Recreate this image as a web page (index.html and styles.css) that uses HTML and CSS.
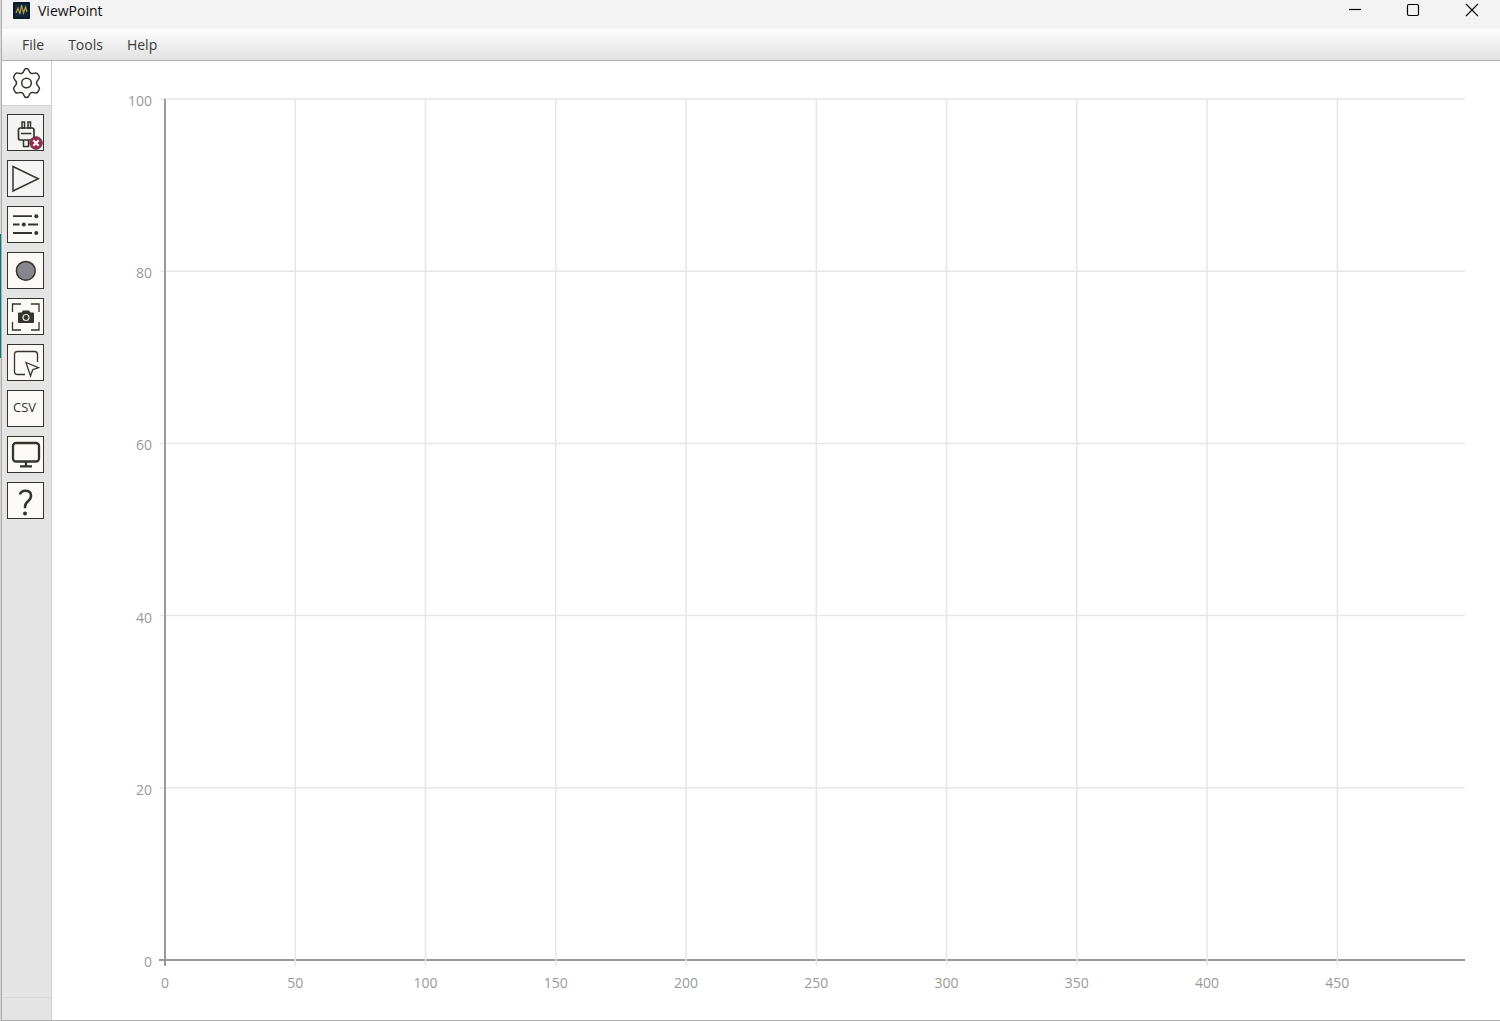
FILE: index.html
```html
<!DOCTYPE html>
<html lang="en">
<head>
    <meta charset="UTF-8">
    <meta name="viewport" content="width=device-width, initial-scale=1.0">
    <title>ViewPoint</title>
    <link rel="stylesheet" href="styles.css">
</head>
<body>
    <div class="desktop-edge"></div>
    <div class="window">
        <!-- Title bar -->
        <header class="title-bar">
            <svg class="app-icon" width="17" height="17" viewBox="0 0 17 17">
                <rect width="17" height="17" rx="1" fill="#0b1b2b"/>
                <rect x="2" y="2" width="13" height="13" fill="#12293b"/>
                <path d="M3 11 L5 6 L7 12 L8.500 3 L10.500 11 L12.500 5 L14 10" fill="none" stroke="#b39a45" stroke-width="1.200"/>
            </svg>
            <h1>ViewPoint</h1>
            <div class="window-controls">
                <button type="button" aria-label="Minimize">
                    <svg width="14" height="14" viewBox="0 0 14 14"><path d="M1 6.500h12"/></svg>
                </button>
                <button type="button" aria-label="Maximize">
                    <svg width="14" height="14" viewBox="0 0 14 14"><rect x="1.500" y="1.500" width="11" height="11" rx="1.500"/></svg>
                </button>
                <button type="button" aria-label="Close">
                    <svg width="14" height="14" viewBox="0 0 14 14"><path d="M2 1l12 12M14 1L2 13"/></svg>
                </button>
            </div>
        </header>

        <!-- Menu bar -->
        <nav class="menu-bar">
            <button type="button">File</button>
            <button type="button">Tools</button>
            <button type="button">Help</button>
        </nav>

        <div class="workspace">
            <!-- Tool bar -->
            <aside class="sidebar">
                <button type="button" class="settings" aria-label="Settings">
                    <svg width="31" height="32" viewBox="0 0 30 32">
                        <path d="M15 1.500c1.500 0 2.200 .8 2.600 2.200c.6 2.300 2.300 3.300 4.500 2.700c2.500-.7 3.500-.7 4.300 .8l1.300 2.300c.7 1.400 .2 2.100-1.200 3.500c-1.800 1.800-1.800 4.200 0 6c1.400 1.400 1.900 2.100 1.200 3.500l-1.300 2.300c-.8 1.500-1.800 1.500-4.300 .8c-2.200-.6-3.900 .4-4.500 2.700c-.4 1.400-1.100 2.200-2.600 2.200s-2.200-.8-2.600-2.200c-.6-2.300-2.300-3.300-4.500-2.700c-2.500 .7-3.500 .7-4.300-.8l-1.300-2.300c-.7-1.400-.2-2.100 1.200-3.500c1.800-1.800 1.800-4.200 0-6c-1.400-1.400-1.900-2.100-1.200-3.500l1.300-2.300c.8-1.500 1.800-1.500 4.300-.8c2.200 .6 3.900-.4 4.500-2.700c.4-1.400 1.100-2.200 2.600-2.200z"/>
                        <circle cx="15" cy="16" r="4.800"/>
                    </svg>
                </button>
                <div class="tools">
                    <button type="button" class="tool pale" aria-label="Connect">
                        <svg width="35" height="35" viewBox="0 0 35 35">
                            <rect x="14" y="7" width="2.500" height="6"/>
                            <rect x="20" y="7" width="2.500" height="6"/>
                            <rect x="10.500" y="13" width="15.500" height="12" rx="2" stroke-width="1.700"/>
                            <path d="M13 18.500h10.500M15.500 25v6.500h5V25"/>
                            <circle cx="28" cy="28" r="6.300" fill="#9b2849" stroke="#6b4450" stroke-width="1"/>
                            <path d="M25.300 25.300l5.400 5.400M30.700 25.300l-5.400 5.400" stroke="#fff" stroke-width="2"/>
                        </svg>
                    </button>
                    <button type="button" class="tool pale" aria-label="Start">
                        <svg width="35" height="35" viewBox="0 0 35 35"><path d="M5 5.500v24.500L30.300 17.800z"/></svg>
                    </button>
                    <button type="button" class="tool" aria-label="Adjust">
                        <svg width="35" height="35" viewBox="0 0 35 35">
                            <path d="M5 9.200h19M5 17.500h6.500M20 17.500h10M5 26h19" stroke-width="1.800"/>
                            <g fill="#34342e" stroke="none">
                                <circle cx="28.300" cy="9.200" r="2"/>
                                <circle cx="15.800" cy="17.500" r="2"/>
                                <circle cx="28.300" cy="26" r="2"/>
                            </g>
                        </svg>
                    </button>
                    <button type="button" class="tool" aria-label="Record">
                        <svg width="35" height="35" viewBox="0 0 35 35"><circle cx="17.800" cy="17.800" r="9.400" fill="#87878b"/></svg>
                    </button>
                    <button type="button" class="tool" aria-label="Screenshot">
                        <svg width="35" height="35" viewBox="0 0 35 35">
                            <path d="M4.500 13V5h8.500M23 5h8v8M31 23v8h-8M13 31H4.500v-8" stroke-width="1.300"/>
                            <path d="M11 13.500h2.500l1.500-2h6l1.500 2h2.500q1 0 1 1v8.500q0 1-1 1h-14q-1 0-1-1v-8.500q0-1 1-1z" fill="#34342e" stroke="none"/>
                            <circle cx="18" cy="18.500" r="3" stroke="#e4e4de" stroke-width="1.200"/>
                        </svg>
                    </button>
                    <button type="button" class="tool" aria-label="Select">
                        <svg width="35" height="35" viewBox="0 0 35 35">
                            <path d="M17 29.500H9.500q-3 0-3-3V9.500q0-3 3-3h17q3 0 3 3V17" stroke-width="1.300"/>
                            <path d="M18 17.500l12.500 5.200l-5.800 2l-2.200 6.300z" stroke-width="1.300"/>
                        </svg>
                    </button>
                    <button type="button" class="tool csv">CSV</button>
                    <button type="button" class="tool" aria-label="Display">
                        <svg width="35" height="35" viewBox="0 0 35 35">
                            <rect x="5" y="6" width="26" height="18.500" rx="3" stroke-width="2.300"/>
                            <path d="M18 24.500v4.500M12 29.300h12" stroke-width="2.300"/>
                        </svg>
                    </button>
                    <button type="button" class="tool" aria-label="About">
                        <svg width="35" height="35" viewBox="0 0 35 35">
                            <path d="M12 11.500q1-3.700 5.500-3.700q5.500 0 5.500 5q0 3-3 5.500q-3 2.500-3 5.500v1.500" stroke-width="2.500"/>
                            <circle cx="17" cy="30.500" r="2" fill="#34342e" stroke="none"/>
                        </svg>
                    </button>
                </div>
                <div class="sidebar-footer"></div>
            </aside>

            <!-- Chart: x runs from 0 to 499, so 50 units are 10.02% of the width -->
            <main class="chart">
                <svg class="plot" role="img" aria-label="Empty chart">
                    <g class="grid">
                        <line x1="-5" x2="100%" y1="0%" y2="0%"/>
                        <line x1="-5" x2="100%" y1="20%" y2="20%"/>
                        <line x1="-5" x2="100%" y1="40%" y2="40%"/>
                        <line x1="-5" x2="100%" y1="60%" y2="60%"/>
                        <line x1="-5" x2="100%" y1="80%" y2="80%"/>
                    </g>
                    <g class="axis">
                        <line x1="-6" x2="100%" y1="100%" y2="100%"/>
                        <svg y="6" overflow="visible"><line x1="0" x2="0" y1="-6" y2="100%"/></svg>
                    </g>
                    <svg class="grid" y="6" overflow="visible">
                        <line x1="10.02%" x2="10.02%" y1="-6" y2="100%"/>
                        <line x1="20.04%" x2="20.04%" y1="-6" y2="100%"/>
                        <line x1="30.06%" x2="30.06%" y1="-6" y2="100%"/>
                        <line x1="40.08%" x2="40.08%" y1="-6" y2="100%"/>
                        <line x1="50.10%" x2="50.10%" y1="-6" y2="100%"/>
                        <line x1="60.12%" x2="60.12%" y1="-6" y2="100%"/>
                        <line x1="70.14%" x2="70.14%" y1="-6" y2="100%"/>
                        <line x1="80.16%" x2="80.16%" y1="-6" y2="100%"/>
                        <line x1="90.18%" x2="90.18%" y1="-6" y2="100%"/>
                    </svg>
                    <g class="y-labels">
                        <text x="-13" y="0%" dy="7">100</text>
                        <text x="-13" y="20%" dy="7">80</text>
                        <text x="-13" y="40%" dy="7">60</text>
                        <text x="-13" y="60%" dy="7">40</text>
                        <text x="-13" y="80%" dy="7">20</text>
                        <text x="-13" y="100%" dy="7">0</text>
                    </g>
                    <g class="x-labels">
                        <text x="0%" y="100%" dy="28">0</text>
                        <text x="10.02%" y="100%" dy="28">50</text>
                        <text x="20.04%" y="100%" dy="28">100</text>
                        <text x="30.06%" y="100%" dy="28">150</text>
                        <text x="40.08%" y="100%" dy="28">200</text>
                        <text x="50.10%" y="100%" dy="28">250</text>
                        <text x="60.12%" y="100%" dy="28">300</text>
                        <text x="70.14%" y="100%" dy="28">350</text>
                        <text x="80.16%" y="100%" dy="28">400</text>
                        <text x="90.18%" y="100%" dy="28">450</text>
                    </g>
                </svg>
            </main>
        </div>
    </div>
</body>
</html>
```
FILE: styles.css
```css
* {
    box-sizing: border-box;
}

body {
    display: flex;
    height: 100vh;
    margin: 0;
    overflow: hidden;
    font-family: "Open Sans", "Noto Sans", sans-serif;
    font-size: 14px;
    background-color: #fff;
}

button {
    padding: 0;
    border: none;
    background: none;
    font: inherit;
    color: inherit;
}

svg {
    display: block;
}

/* Strip of the desktop behind the window */
.desktop-edge {
    width: 2px;
    border-right: 1px solid #acacac;
    background: linear-gradient(#d8d8de 234px, #007a80 234px, #007a80 358px, #d4d4d4 358px);
}

.window {
    flex: 1;
    min-width: 0;
    display: flex;
    flex-direction: column;
    border-bottom: 1px solid #acacac;
}

.title-bar {
    display: flex;
    align-items: flex-start;
    height: 29px;
    padding: 2px 0 0 11px;
    background-color: #f3f3f3;
}

.title-bar h1 {
    margin: 0 0 0 8px;
    font-size: 14px;
    font-weight: 400;
    line-height: 18px;
    color: #111;
}

.window-controls {
    display: flex;
    margin-left: auto;
}

.window-controls button {
    display: flex;
    justify-content: center;
    width: 58px;
    padding-top: 1px;
}

.window-controls svg {
    fill: none;
    stroke: #000;
    stroke-width: 1.2;
}

.menu-bar {
    display: flex;
    gap: 24px;
    height: 32px;
    padding: 0 20px;
    border-bottom: 1px solid #b0b0b0;
    background: linear-gradient(#fdfdfd, #e2e2e2);
    color: #3c3c3c;
}

.workspace {
    flex: 1;
    min-height: 0;
    display: flex;
}

.sidebar {
    display: flex;
    flex-direction: column;
    width: 50px;
    border-right: 1px solid #d0d0d0;
    background-color: #e4e4e4;
}

.sidebar svg {
    fill: none;
    stroke: #34342e;
    stroke-width: 1.5;
}

.settings {
    display: flex;
    align-items: center;
    justify-content: center;
    height: 45px;
    border-bottom: 1px solid #d4d4d4;
    background-color: #fff;
}

.tools {
    flex: 1;
    display: flex;
    flex-direction: column;
    gap: 9px;
    padding: 8px 5px;
}

.tool {
    width: 37px;
    height: 37px;
    border: 1px solid #34342e;
    background-color: #fbfaf6;
    color: #34342e;
}

.tool.pale {
    background-color: #f4f4f4;
}

.tool.csv {
    padding: 0 2px 4px 0;
    font-size: 13px;
    font-weight: 500;
}

.sidebar-footer {
    height: 23px;
    border-top: 1px solid #d8d8d8;
}

.chart {
    flex: 1;
    min-width: 0;
    display: flex;
    padding: 38px 35px 60px 113px;
}

.plot {
    width: 100%;
    height: 100%;
    overflow: visible;
    font-size: 14px;
    fill: #999;
}

.grid {
    stroke: #e6e6e6;
    stroke-width: 1.5;
}

.axis {
    stroke: #999;
    stroke-width: 2;
}

.y-labels {
    text-anchor: end;
}

.x-labels {
    text-anchor: middle;
}
```
